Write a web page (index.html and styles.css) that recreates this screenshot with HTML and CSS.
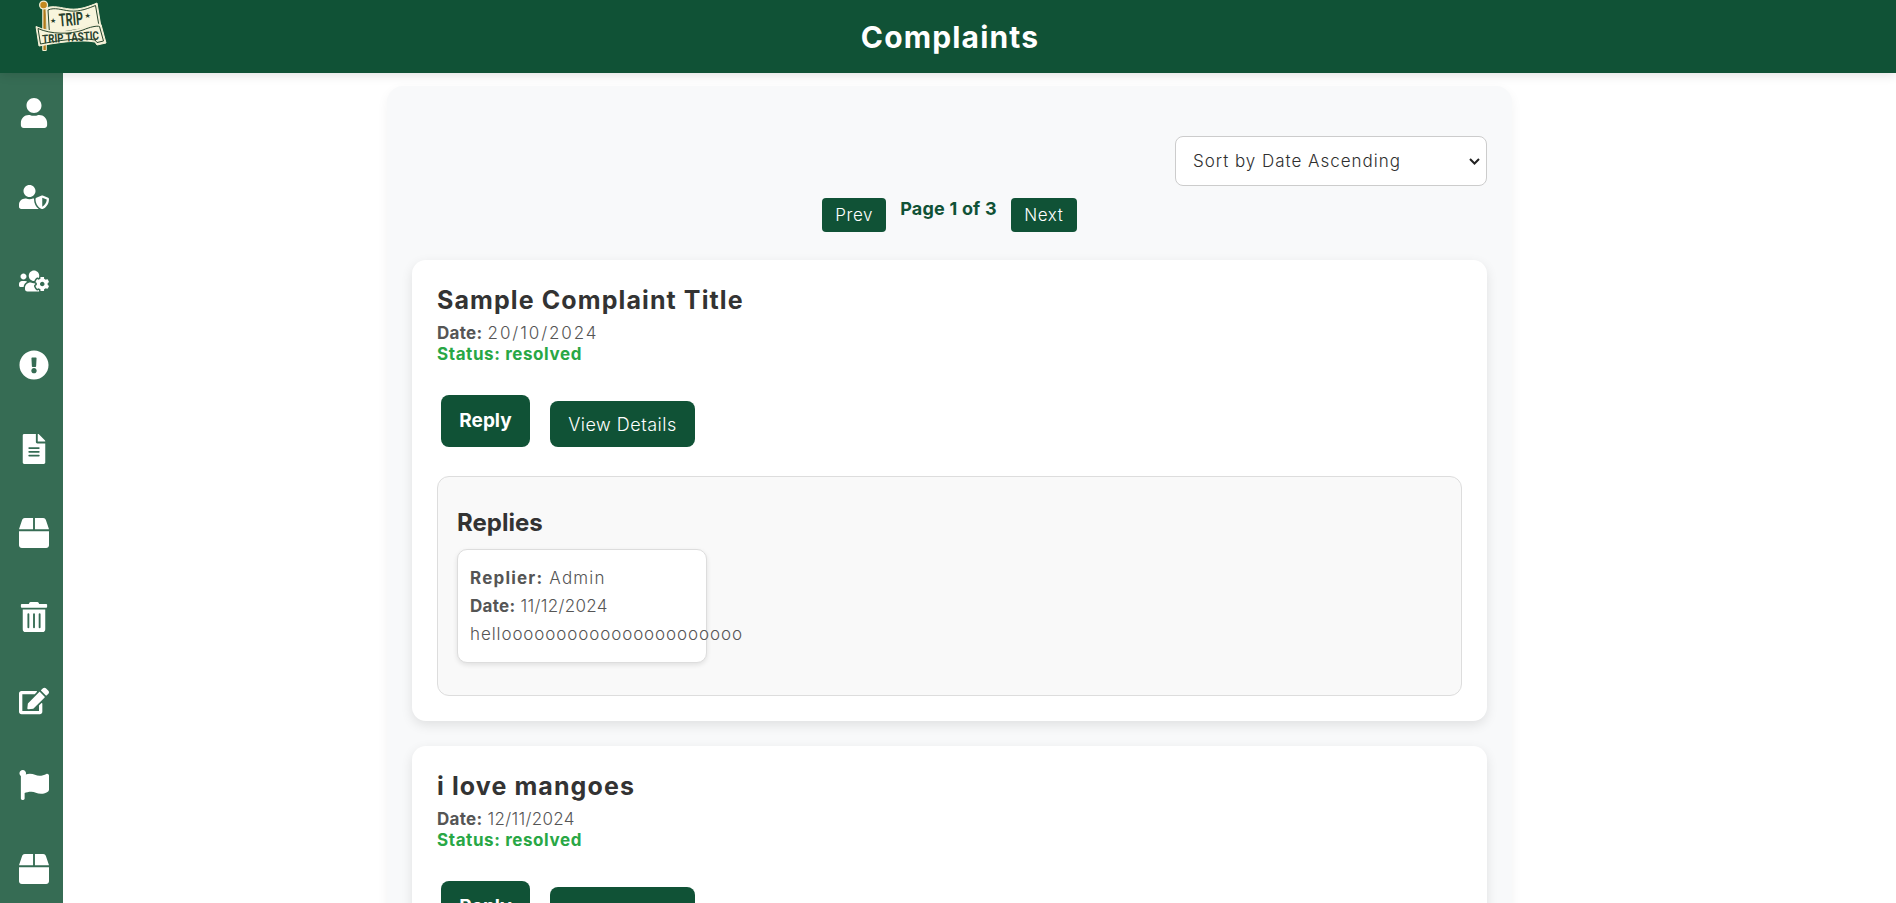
FILE: index.html
```html
<!DOCTYPE html>
<html lang="en">
<head>
<meta charset="utf-8">
<title>Complaints</title>
<link rel="stylesheet" href="styles.css">
</head>
<body>
<header class="topbar">
  <svg class="logo" viewBox="0 0 80 56" width="80" height="56" aria-label="Trip Tastic">
    <rect x="12.2" y="4" width="4.6" height="47" rx="1" fill="#f4efd0"/>
    <rect x="13.4" y="5" width="2.4" height="45" fill="#b07a1c"/>
    <circle cx="13.6" cy="5" r="4.6" fill="#f4efd0"/>
    <circle cx="13.6" cy="5" r="3.3" fill="#c48a1e"/>
    <path class="ban-o" d="M16 8C24 5 31 8 40 9C50 10 60 6 67 3L71 27L18 37Z"/>
    <path class="ban-i" d="M18 10C25 7 31 10 40 11C50 12 59 8 65.5 5.5L69 26L19.5 34Z"/>
    <text class="logo-big" x="29" y="25.5" textLength="24" lengthAdjust="spacingAndGlyphs" transform="rotate(-5 41 20)">TRIP</text>
    <text class="logo-star" x="20" y="23">★</text>
    <text class="logo-star" x="54.5" y="18">★</text>
    <path class="ban-o" d="M6 26.5C20 33 40 33 52 28C60 25 68 23.5 71 24.5L76 43L67 45L65 42C50 39 25 43 9 46Z"/>
    <path class="ban-i" d="M8 28.5C21 34.5 41 34.5 53 30C60 27 67 25.5 69.5 26.5L73.5 41L67 42.5L65 40C50 37 25 41 10.5 44Z"/>
    <text class="logo-small" x="12" y="41.5" textLength="57" lengthAdjust="spacingAndGlyphs" transform="rotate(-4 40 37)">TRIP TASTIC</text>
  </svg>
  <h1 class="page-title">Complaints</h1>
</header>
<div class="layout">
  <nav class="sidebar">
    <svg class="nav-icon" viewBox="0 0 448 512"><path d="M224 256c70.7 0 128-57.3 128-128S294.7 0 224 0 96 57.3 96 128s57.3 128 128 128zm89.6 32h-16.7c-22.2 10.2-46.9 16-72.9 16s-50.6-5.8-72.9-16h-16.7C60.2 288 0 348.2 0 422.4V464c0 26.5 21.5 48 48 48h352c26.5 0 48-21.5 48-48v-41.6c0-74.2-60.2-134.4-134.4-134.4z"/></svg>
    <svg class="nav-icon" viewBox="0 0 640 512"><path d="M622.3 271.1l-115.2-45c-4.1-1.6-12.6-3.7-22.2 0l-115.2 45c-10.7 4.2-17.7 14-17.7 24.9 0 111.6 68.7 188.8 132.9 213.9 9.6 3.7 18 1.6 22.2 0C558.4 489.9 640 420.5 640 296c0-10.9-7-20.7-17.7-24.9zM496 462.4V273.3l95.5 37.3c-5.6 87.1-60.9 135.4-95.5 151.8zM224 256c70.7 0 128-57.3 128-128S294.7 0 224 0 96 57.3 96 128s57.3 128 128 128zm96 40c0-2.5.8-4.7 1.1-7.2-2.5-.1-4.9-.8-7.5-.8h-16.7c-22.2 10.2-46.9 16-72.9 16s-50.6-5.8-72.9-16h-16.7C60.2 288 0 348.2 0 422.4V464c0 26.5 21.5 48 48 48h352c6.8 0 13.3-1.5 19.2-4-54-42.9-99.2-116.7-99.2-212z"/></svg>
    <svg class="nav-icon" viewBox="0 0 640 512"><path d="M610.5 341.3c2.6-14.1 2.6-28.5 0-42.6l25.8-14.9c3-1.7 4.3-5.2 3.3-8.5-6.7-21.6-18.2-41.2-33.2-57.4-2.3-2.5-6-3.1-9-1.4l-25.8 14.9c-10.9-9.3-23.4-16.5-36.9-21.3v-29.8c0-3.4-2.4-6.4-5.7-7.1-22.3-5-45-4.8-66.2 0-3.3.7-5.7 3.7-5.7 7.1v29.8c-13.5 4.8-26 12-36.9 21.3l-25.8-14.9c-2.9-1.7-6.7-1.1-9 1.4-15 16.2-26.5 35.8-33.2 57.4-1 3.3.4 6.8 3.3 8.5l25.8 14.9c-2.6 14.1-2.6 28.5 0 42.6l-25.8 14.9c-3 1.7-4.3 5.2-3.3 8.5 6.7 21.6 18.2 41.1 33.2 57.4 2.3 2.5 6 3.1 9 1.4l25.8-14.9c10.9 9.3 23.4 16.5 36.9 21.3v29.8c0 3.4 2.4 6.4 5.7 7.1 22.3 5 45 4.8 66.2 0 3.3-.7 5.7-3.7 5.7-7.1v-29.8c13.5-4.8 26-12 36.9-21.3l25.8 14.9c2.9 1.7 6.7 1.1 9-1.4 15-16.2 26.5-35.8 33.2-57.4 1-3.3-.4-6.8-3.3-8.5l-25.8-14.9zM496 368.5c-26.8 0-48.5-21.8-48.5-48.5s21.8-48.5 48.5-48.5 48.5 21.8 48.5 48.5-21.7 48.5-48.5 48.5zM96 224c35.3 0 64-28.7 64-64s-28.7-64-64-64-64 28.7-64 64 28.7 64 64 64zm224 32c1.9 0 3.7-.5 5.6-.6 8.3-21.7 20.5-42.1 36.3-59.2 7.4-8 17.9-12.6 28.9-12.6 6.9 0 13.7 1.8 19.6 5.3l7.9 4.6c.8-.5 1.6-.9 2.4-1.4 7-14.6 11.2-30.8 11.2-47.9 0-61.9-50.1-112-112-112S208 82.1 208 144c0 61.9 50.1 112 112 112zm105.2 194.5c-2.3-1.2-4.6-2.6-6.8-3.9-8.2 4.8-15.3 9.8-27.5 9.8-10.9 0-21.4-4.6-28.9-12.6-18.3-19.8-32.3-43.9-40.2-69.6-10.7-34.5 24.9-49.7 25.8-50.3-.1-2.6-.1-5.2 0-7.8l-7.9-4.6c-3.8-2.2-7-5-9.8-8.1-3.3.2-6.5.6-9.8.6-24.6 0-47.6-6-68.5-16h-8.3C179.6 288 128 339.6 128 403.2V432c0 26.5 21.5 48 48 48h255.4c-3.7-6-6.2-12.8-6.2-20.3v-9.2zM173.1 274.6C161.5 263.1 145.6 256 128 256H64c-35.3 0-64 28.7-64 64v32c0 17.7 14.3 32 32 32h65.9c6.3-47.4 34.9-87.3 75.2-109.4z"/></svg>
    <svg class="nav-icon" viewBox="0 0 512 512"><path d="M504 256c0 136.997-111.043 248-248 248S8 392.997 8 256C8 119.083 119.043 8 256 8s248 111.083 248 248zm-248 50c-25.405 0-46 20.595-46 46s20.595 46 46 46 46-20.595 46-46-20.595-46-46-46zm-43.673-165.346l7.418 136c.347 6.364 5.609 11.346 11.982 11.346h48.546c6.373 0 11.635-4.982 11.982-11.346l7.418-136c.375-6.874-5.098-12.654-11.982-12.654h-63.383c-6.884 0-12.356 5.78-11.981 12.654z"/></svg>
    <svg class="nav-icon" viewBox="0 0 384 512"><path d="M224 136V0H24C10.7 0 0 10.7 0 24v464c0 13.3 10.7 24 24 24h336c13.3 0 24-10.7 24-24V160H248c-13.2 0-24-10.8-24-24zm64 236c0 6.6-5.4 12-12 12H108c-6.6 0-12-5.4-12-12v-8c0-6.6 5.4-12 12-12h168c6.6 0 12 5.4 12 12v8zm0-64c0 6.6-5.4 12-12 12H108c-6.6 0-12-5.4-12-12v-8c0-6.6 5.4-12 12-12h168c6.6 0 12 5.4 12 12v8zm0-72v8c0 6.6-5.4 12-12 12H108c-6.6 0-12-5.4-12-12v-8c0-6.6 5.4-12 12-12h168c6.6 0 12 5.4 12 12zm96-114.1v6.1H256V0h6.1c6.4 0 12.5 2.5 17 7l97.9 98c4.5 4.5 7 10.6 7 16.9z"/></svg>
    <svg class="nav-icon" viewBox="0 0 512 512"><path d="M509.5 184.6L458.9 32.8C452.4 13.2 434.1 0 413.4 0H272v192h238.7c-.4-2.5-.4-5-1.2-7.4zM240 0H98.6c-20.7 0-39 13.2-45.5 32.8L2.5 184.6c-.8 2.4-.8 4.9-1.2 7.4H240V0zM0 224v240c0 26.5 21.5 48 48 48h416c26.5 0 48-21.5 48-48V224H0z"/></svg>
    <svg class="nav-icon" viewBox="0 0 448 512"><path d="M32 464a48 48 0 0 0 48 48h288a48 48 0 0 0 48-48V128H32zm272-256a16 16 0 0 1 32 0v224a16 16 0 0 1-32 0zm-96 0a16 16 0 0 1 32 0v224a16 16 0 0 1-32 0zm-96 0a16 16 0 0 1 32 0v224a16 16 0 0 1-32 0zM432 32H312l-9.4-18.7A24 24 0 0 0 281.1 0H166.8a23.72 23.72 0 0 0-21.4 13.3L136 32H16A16 16 0 0 0 0 48v32a16 16 0 0 0 16 16h416a16 16 0 0 0 16-16V48a16 16 0 0 0-16-16z"/></svg>
    <svg class="nav-icon" viewBox="0 0 576 512"><path d="M402.6 83.2l90.2 90.2c3.8 3.8 3.8 10 0 13.8L274.4 405.6l-92.8 10.3c-12.4 1.4-22.9-9.1-21.5-21.5l10.3-92.8L388.8 83.2c3.8-3.8 10-3.8 13.8 0zm162-22.9l-48.8-48.8c-15.2-15.2-39.9-15.2-55.2 0l-35.4 35.4c-3.8 3.8-3.8 10 0 13.8l90.2 90.2c3.8 3.8 10 3.8 13.8 0l35.4-35.4c15.2-15.3 15.2-40 0-55.2zM384 346.2V448H64V128h229.8c3.2 0 6.2-1.3 8.5-3.5l40-40c7.6-7.6 2.2-20.5-8.5-20.5H48C21.5 64 0 85.5 0 112v352c0 26.5 21.5 48 48 48h352c26.5 0 48-21.5 48-48V306.2c0-10.7-12.9-16-20.5-8.5l-40 40c-2.2 2.3-3.5 5.3-3.5 8.5z"/></svg>
    <svg class="nav-icon" viewBox="0 0 512 512"><path d="M349.565 98.783C295.978 98.783 251.721 64 184.348 64c-24.955 0-47.309 4.384-68.045 12.013a55.947 55.947 0 0 0 3.586-23.562C118.117 24.015 94.806 1.206 66.338.048 34.345-1.254 8 24.296 8 56c0 19.026 9.497 35.825 24 45.945V488c0 13.255 10.745 24 24 24h16c13.255 0 24-10.745 24-24v-94.4c28.311-12.064 63.582-22.122 114.435-22.122 53.588 0 97.844 34.783 165.217 34.783 48.169 0 86.667-16.294 122.505-40.858C506.84 359.452 512 349.571 512 339.045v-243.1c0-23.393-24.269-38.87-45.485-29.016-34.338 15.948-76.454 31.854-116.95 31.854z"/></svg>
    <svg class="nav-icon" viewBox="0 0 512 512"><path d="M509.5 184.6L458.9 32.8C452.4 13.2 434.1 0 413.4 0H272v192h238.7c-.4-2.5-.4-5-1.2-7.4zM240 0H98.6c-20.7 0-39 13.2-45.5 32.8L2.5 184.6c-.8 2.4-.8 4.9-1.2 7.4H240V0zM0 224v240c0 26.5 21.5 48 48 48h416c26.5 0 48-21.5 48-48V224H0z"/></svg>
  </nav>
  <main class="content">
    <section class="panel">
      <div class="sort-row">
        <select class="sort-select">
          <option>Sort by Date Ascending</option>
          <option>Sort by Date Descending</option>
        </select>
      </div>
      <div class="pager">
        <button class="pager-btn pager-prev">Prev</button>
        <span class="pager-label">Page 1 of 3</span>
        <button class="pager-btn pager-next">Next</button>
      </div>
      <article class="card">
        <h2 class="card-title">Sample Complaint Title</h2>
        <p class="meta"><strong>Date:</strong> <span class="value wide-digits">20/10/2024</span></p>
        <p class="status">Status: resolved</p>
        <div class="actions">
          <button class="btn btn-reply">Reply</button>
          <button class="btn btn-view">View Details</button>
        </div>
        <div class="replies">
          <h3 class="replies-title">Replies</h3>
          <div class="reply">
            <p class="reply-line replier"><strong>Replier:</strong> <span class="value">Admin</span></p>
            <p class="reply-line"><strong>Date:</strong> <span class="value">11/12/2024</span></p>
            <p class="reply-line reply-body value">helloooooooooooooooooooooo</p>
          </div>
        </div>
      </article>
      <article class="card">
        <h2 class="card-title">i love mangoes</h2>
        <p class="meta"><strong>Date:</strong> <span class="value">12/11/2024</span></p>
        <p class="status">Status: resolved</p>
        <div class="actions">
          <button class="btn btn-reply">Reply</button>
          <button class="btn btn-view">View Details</button>
        </div>
      </article>
    </section>
  </main>
</div>
</body>
</html>
```
FILE: styles.css
```css
* { box-sizing: border-box; }
html, body { margin: 0; height: 100%; overflow: hidden; background: #fff; }
body { font-family: "Inter", "Noto Sans", sans-serif; color: #333; }

.topbar {
  height: 73px;
  padding-left: 4px;
  background: #105236;
  display: grid;
  grid-template-columns: 1fr auto 1fr;
  align-items: start;
  box-shadow: 0 2px 10px rgba(0,0,0,.12);
  position: relative;
  z-index: 2;
}
.logo { margin: 0 0 0 26px; display: block; overflow: visible; }
.ban-o { fill: #f6f2d8; stroke: #f6f2d8; stroke-width: 1; }
.ban-i { fill: #f8f5dc; stroke: #27452c; stroke-width: 1; }
.logo-big { font: 700 18px "Roboto", sans-serif; fill: #27402c; }
.logo-star { font: 700 7px "DejaVu Sans", sans-serif; fill: #27402c; }
.logo-small { font: 700 12px "Roboto", sans-serif; fill: #27402c; }
.page-title {
  margin: 19px 0 0;
  font-size: 30px;
  line-height: 36px;
  font-weight: 700;
  color: #fff;
  letter-spacing: 1.15px;
}

.layout { display: flex; height: calc(100vh - 73px); }
.sidebar {
  width: 63px;
  flex: none;
  background: #366c54;
  padding: 25px 0 0 19px;
  display: flex;
  flex-direction: column;
  gap: 54px;
}
.nav-icon { width: 30px; height: 30px; fill: #fff; flex: none; display: block; }

.content { flex: 1; min-width: 0; padding: 13px 0 0 324px; overflow: hidden; }
.panel {
  width: 1125px;
  background: #f8f9fa;
  border-radius: 16px;
  padding: 50px 25px 25px;
  box-shadow: 0 4px 12px rgba(0,0,0,.05);
}
.sort-row { display: flex; justify-content: flex-end; }
.sort-select {
  appearance: none;
  -webkit-appearance: none;
  width: 312px;
  height: 50px;
  padding: 0 30px 0 17px;
  font: 300 17px "Inter", sans-serif;
  color: #2f2f2f;
  letter-spacing: .98px;
  background: #fff url("data:image/svg+xml,%3Csvg xmlns='http://www.w3.org/2000/svg' width='11' height='7' viewBox='0 0 11 7'%3E%3Cpath d='M1 1l4.5 4.5L10 1' fill='none' stroke='%23222' stroke-width='2'/%3E%3C/svg%3E") no-repeat right 6px center;
  border: 1px solid #ccc;
  border-radius: 8px;
}
.pager {
  margin-top: 12px;
  height: 62px;
  display: flex;
  justify-content: center;
  align-items: flex-start;
  gap: 14px;
}
.pager-btn {
  height: 34px;
  padding: 0;
  font: 300 17px "Inter", sans-serif;
  letter-spacing: .6px;
  color: #fff;
  background: #105236;
  border: 0;
  border-radius: 4px;
}
.pager-prev { width: 64px; }
.pager-next { width: 66px; }
.pager-label { font-weight: 700; font-size: 18px; line-height: 22px; color: #105236; letter-spacing: .2px; }

.card {
  background: #fff;
  border-radius: 14px;
  padding: 25px;
  margin-bottom: 24.5px;
  box-shadow: 0 4px 12px rgba(0,0,0,.1);
}
.card-title { margin: 0 0 8px; font-size: 25px; line-height: 30px; font-weight: 700; color: #333; letter-spacing: 1.1px; }
.meta, .status { margin: 0; font-size: 17px; line-height: 21px; }
.meta { color: #555; letter-spacing: .3px; }
.value { font-weight: 300; }
.wide-digits { letter-spacing: 1.9px; }
.status { font-weight: 700; color: #28a745; letter-spacing: .6px; }
.actions { display: flex; align-items: flex-end; gap: 20px; margin: 30px 0 29px 4px; }
.btn { border: 0; border-radius: 8px; background: #105236; color: #fff; font-family: inherit; font-size: 18px; }
.btn-reply { width: 89px; height: 52px; font-size: 19px; font-weight: 700; padding-bottom: 2px; }
.btn-view { width: 145px; height: 46px; font-weight: 300; letter-spacing: .5px; padding-top: 2px; }

.replies {
  background: #f9f9f9;
  border: 1px solid #ddd;
  border-radius: 12px;
  padding: 31px 19px 31px;
  height: 220px;
}
.replies-title { margin: 0 0 11px; font-size: 24px; line-height: 30px; font-weight: 700; color: #333; }
.reply {
  width: 250px;
  background: #fff;
  border: 1px solid #ddd;
  border-radius: 10px;
  padding: 14px 12px;
  box-shadow: 0 2px 5px rgba(0,0,0,.1);
}
.reply-line { margin: 0; font-size: 17px; line-height: 28px; color: #555; white-space: nowrap; letter-spacing: .3px; }
.replier { letter-spacing: 1.2px; }
.reply-body { letter-spacing: .9px; }
```
